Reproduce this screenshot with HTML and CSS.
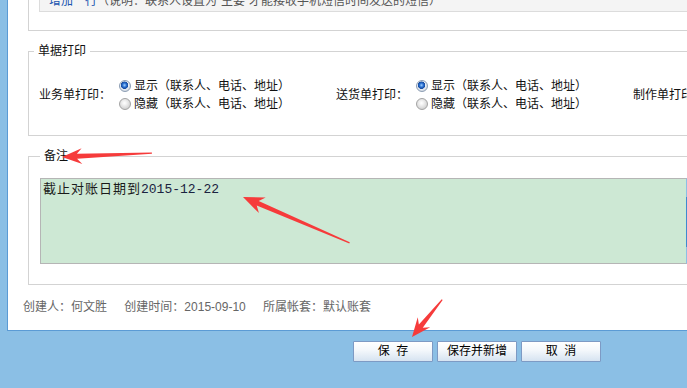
FILE: index.html
```html
<!DOCTYPE html>
<html lang="zh">
<head>
	<meta charset="UTF-8" />
	<title>客户资料</title>
	<link rel="stylesheet" href="styles.css">
</head>
<body>
	<div class="panel">
		<div class="sec-top">
			<div class="note"><a class="add">增加一行</a><span class="tip">（说明：联系人设置为“主要”才能接收手机短信时间发送的短信）</span></div>
		</div>

		<fieldset class="box print">
			<legend>单据打印</legend>
			<div class="groups">
				<div class="group">
					<span class="lab">业务单打印：</span>
					<div class="opts">
						<label><i class="radio on"></i>显示（联系人、电话、地址）</label>
						<label><i class="radio"></i>隐藏（联系人、电话、地址）</label>
					</div>
				</div>
				<div class="group">
					<span class="lab">送货单打印：</span>
					<div class="opts">
						<label><i class="radio on"></i>显示（联系人、电话、地址）</label>
						<label><i class="radio"></i>隐藏（联系人、电话、地址）</label>
					</div>
				</div>
				<div class="group">
					<span class="lab">制作单打印：</span>
					<div class="opts">
						<label><i class="radio on"></i>显示（联系人、电话、地址）</label>
						<label><i class="radio"></i>隐藏（联系人、电话、地址）</label>
					</div>
				</div>
			</div>
		</fieldset>

		<fieldset class="box memo-box">
			<legend>备注</legend>
			<div class="memo"><span class="cn">截止对账日期到</span><span class="num">2015-12-22</span></div>
		</fieldset>

		<div class="foot">
			<span>创建人：何文胜</span>
			<span>创建时间：2015-09-10</span>
			<span>所属帐套：默认账套</span>
		</div>
	</div>

	<div class="btns">
		<button class="btn">保&nbsp;&nbsp;存</button>
		<button class="btn">保存并新增</button>
		<button class="btn">取&nbsp;&nbsp;消</button>
	</div>

	<!-- 标注箭头 -->
	<svg class="marks" width="687" height="388" viewBox="0 0 687 388">
		<g fill="#f63b3b">
			<polygon transform="translate(62,157) rotate(-2.5)" points="0,0 20,-8 15,-2.5 90,-0.6 90,0.6 15,2.5 20,8" />
			<polygon transform="translate(243,197) rotate(23.3)" points="0,0 21,-8.5 16,-2.5 116,-0.6 116,0.6 16,2.5 21,8.5" />
			<polygon transform="translate(412,337) rotate(-51)" points="0,0 19,-8 14,-2.5 48,-0.6 48,0.6 14,2.5 19,8" />
		</g>
	</svg>
</body>
</html>
```

FILE: styles.css
```css
*{margin: 0;padding: 0;box-sizing: border-box;}
html,body{height: 100%;overflow: hidden;}
body{
	background: #8bbfe5;position: relative;
	font: 12px/18px "Liberation Sans","Noto Sans CJK SC",sans-serif;color: #222;
}
.panel{
	margin-left: 7px;width: 900px;height: 331px;
	background: #fff;border-left: 1px solid #5b9bd5;border-bottom: 1px solid #5b9bd5;
	overflow: hidden;
}
/* 顶部联系人区域（被截去上半部分） */
.sec-top{
	margin: -22px 0 0 20px;padding: 0 0 18px 10px;
	border: 1px solid #d3d3d3;border-top: 0;border-right: 0;
}
.note{
	height: 34px;padding: 12px 0 0 9px;line-height: 20px;
	background: #f4f4f4;border: 1px solid #dcdcdc;border-right: 0;
	white-space: nowrap;
}
.note .add{color: #1a55b0;}
.note .tip{color: #555;}

.box{
	margin: 13px 0 0 20px;border: 1px solid #d3d3d3;border-right: 0;
	padding: 0 0 0 5px;
}
.box legend{padding: 0 4px;line-height: 14px;font-size: 12px;color: #111;}
.print{padding-top: 19px;padding-bottom: 22px;}
.groups{display: flex;padding-left: 5px;}
.group{display: flex;align-items: center;width: 297px;flex: none;}
.lab{width: 80px;flex: none;color: #111;}
.opts{display: flex;flex-direction: column;}
.opts label{display: flex;align-items: center;height: 18px;white-space: nowrap;color: #111;}
.radio{
	display: block;width: 12px;height: 12px;margin-right: 3px;border-radius: 50%;
	border: 1px solid #a3a3a3;
	background: radial-gradient(circle at 45% 40%, #fff 0, #f2f2f2 2px, #d2d2d2 6px);
}
.radio.on{
	border-color: #8c9db3;
	background: radial-gradient(circle at 45% 42%, #9fd0ff 0, #2a6fd0 2px, #154a9e 3.4px, #e9eef5 4px, #cfd6df 6px);
}

.memo-box{padding: 15px 0 20px 11px;}
.memo{
	position: relative;width: 647px;height: 86px;padding: 2px 2px;
	background: #cde8d4;border: 1px solid #b5b5b5;border-right-color: #8bbfe5;
	font: 13px/18px "Liberation Mono","Noto Sans CJK SC",monospace;color: #1a1a1a;
}
.memo .cn{letter-spacing: 1px;}
.memo .num{color: #1a2340;}
.memo::after{
	content: "";position: absolute;right: -1px;top: 18px;
	width: 1px;height: 50px;background: #3f8ad0;
}

.foot{height: 45px;padding: 14px 0 0 15px;line-height: 16px;color: #666;white-space: nowrap;}
.foot span{margin-right: 14px;}

.btns{display: flex;gap: 4px;padding: 10px 0 0 353px;}
.btn{
	width: 80px;height: 21px;
	border: 1px solid #7d9ac4;border-radius: 1px;
	background: linear-gradient(#ffffff, #f3f7fb 45%, #d6e3f1);
	font: 12px/19px "Liberation Sans","Noto Sans CJK SC",sans-serif;color: #000;
}

.marks{position: absolute;top: 0;left: 0;pointer-events: none;}
```
